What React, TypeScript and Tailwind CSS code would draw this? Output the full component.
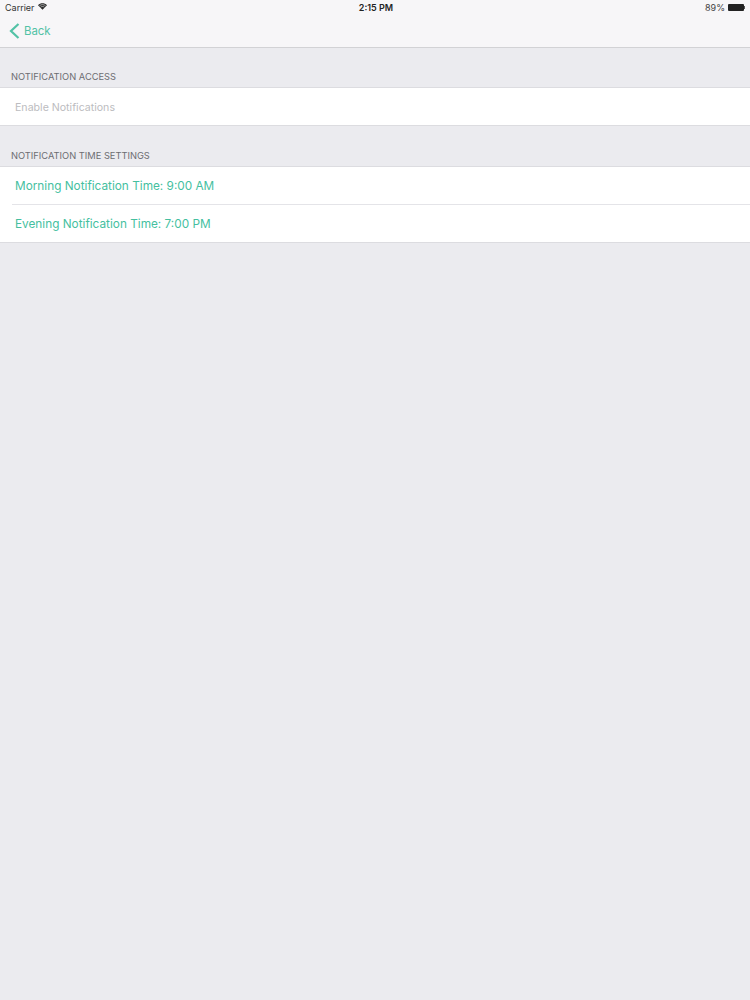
import { ReactNode } from 'react';

const font = { fontFamily: 'Inter, "Liberation Sans", sans-serif' };

const Wifi = () => (
    <svg width="9" height="7" viewBox="0 0 11 8" className="ml-[3px] mt-[-2px]">
        <path d="M5.5 8 L0 2.4 C3 -0.8 8 -0.8 11 2.4 Z" fill="#2a2a2a" />
        <path d="M1.7 3.2 C3.8 1.2 7.2 1.2 9.3 3.2" stroke="#f7f7f8" strokeWidth="0.7" fill="none" />
        <path d="M3.2 4.8 C4.5 3.7 6.5 3.7 7.8 4.8" stroke="#f7f7f8" strokeWidth="0.7" fill="none" />
    </svg>
);

const Battery = () => (
    <div className="flex items-center ml-[3px]">
        <div className="w-[16px] h-[7px] bg-[#222] rounded-[1px]" />
        <div className="w-[1px] h-[3px] bg-[#555]" />
    </div>
);

const SectionHeader = ({ children, className }: { children: ReactNode; className: string }) => (
    <div className={`px-[11px] flex items-end text-[9.3px] leading-[12px] text-[#6d6d72] ${className}`}>
        {children}
    </div>
);

export default function App() {
    return (
        <div style={font} className="w-[750px] h-[1000px] bg-[#ebebef] flex flex-col overflow-hidden">
            <header className="h-[48px] bg-[#f7f6f8] border-b border-[#d2d2d5] flex flex-col shrink-0">
                <div className="h-[15px] flex items-center justify-between px-[5px] text-[9px] text-[#333]">
                    <div className="w-[100px] flex items-center">
                        <span>Carrier</span>
                        <Wifi />
                    </div>
                    <span className="font-semibold text-[#222] ml-[2px]">2:15 PM</span>
                    <div className="w-[100px] flex items-center justify-end">
                        <span className="text-[#444]">89%</span>
                        <Battery />
                    </div>
                </div>
                <div className="flex items-center h-[32px] pl-[9px] text-[#52c2a6]">
                    <svg width="11" height="16" viewBox="0 0 11 16" fill="none">
                        <path d="M9.5 1 L2 8 L9.5 15" stroke="#52c2a6" strokeWidth="2.2" />
                    </svg>
                    <span className="text-[11.4px] ml-[4px] pt-[2px]">Back</span>
                </div>
            </header>

            <SectionHeader className="h-[39px] pb-[4px]">NOTIFICATION ACCESS</SectionHeader>
            <div className="bg-white border-y border-[#dcdce0] h-[39px] flex items-center pl-[15px] pt-[3px] text-[10.6px] text-[#bcbcc0]">
                Enable Notifications
            </div>

            <SectionHeader className="h-[40px] pb-[4px]">NOTIFICATION TIME SETTINGS</SectionHeader>
            <div className="bg-white border-y border-[#dcdce0]">
                <div className="h-[37px] flex items-center pl-[15px] pt-[3px] text-[11.8px] text-[#45bf9f]">
                    Morning Notification Time: 9:00 AM
                </div>
                <div className="ml-[12px] border-t border-[#e4e4e8]" />
                <div className="h-[37px] flex items-center pl-[15px] pt-[3px] text-[11.8px] text-[#45bf9f]">
                    Evening Notification Time: 7:00 PM
                </div>
            </div>
        </div>
    );
}
